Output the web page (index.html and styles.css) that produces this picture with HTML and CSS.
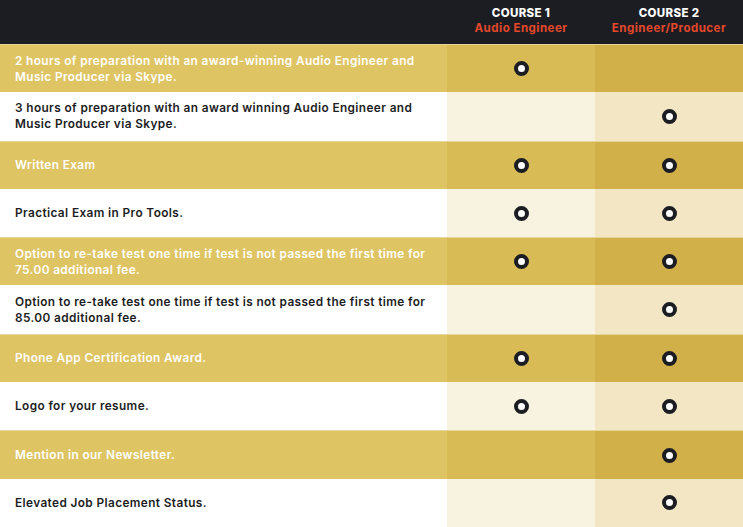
FILE: index.html
```html
<!DOCTYPE html>
<html>
<head>
<meta charset="utf-8">
<link rel="stylesheet" href="styles.css">
</head>
<body>
<div class="table">
  <div class="row head">
    <div class="label"></div>
    <div class="course"><span class="num">COURSE 1</span><span class="name">Audio Engineer</span></div>
    <div class="course"><span class="num">COURSE 2</span><span class="name">Engineer/Producer</span></div>
  </div>
  <div class="row gold">
    <div class="label"><span>2 hours of preparation with an award-winning Audio Engineer and Music Producer via Skype.</span></div>
    <div class="c1"><span class="dot"></span></div>
    <div class="c2"></div>
  </div>
  <div class="row light">
    <div class="label"><span>3 hours of preparation with an award winning Audio Engineer and Music Producer via Skype.</span></div>
    <div class="c1"></div>
    <div class="c2"><span class="dot"></span></div>
  </div>
  <div class="row gold">
    <div class="label"><span>Written Exam</span></div>
    <div class="c1"><span class="dot"></span></div>
    <div class="c2"><span class="dot"></span></div>
  </div>
  <div class="row light">
    <div class="label"><span>Practical Exam in Pro Tools.</span></div>
    <div class="c1"><span class="dot"></span></div>
    <div class="c2"><span class="dot"></span></div>
  </div>
  <div class="row gold">
    <div class="label"><span>Option to re-take test one time if test is not passed the first time for 75.00 additional fee.</span></div>
    <div class="c1"><span class="dot"></span></div>
    <div class="c2"><span class="dot"></span></div>
  </div>
  <div class="row light">
    <div class="label"><span>Option to re-take test one time if test is not passed the first time for 85.00 additional fee.</span></div>
    <div class="c1"></div>
    <div class="c2"><span class="dot"></span></div>
  </div>
  <div class="row gold">
    <div class="label"><span>Phone App Certification Award.</span></div>
    <div class="c1"><span class="dot"></span></div>
    <div class="c2"><span class="dot"></span></div>
  </div>
  <div class="row light">
    <div class="label"><span>Logo for your resume.</span></div>
    <div class="c1"><span class="dot"></span></div>
    <div class="c2"><span class="dot"></span></div>
  </div>
  <div class="row gold">
    <div class="label"><span>Mention in our Newsletter.</span></div>
    <div class="c1"></div>
    <div class="c2"><span class="dot"></span></div>
  </div>
  <div class="row light">
    <div class="label"><span>Elevated Job Placement Status.</span></div>
    <div class="c1"></div>
    <div class="c2"><span class="dot"></span></div>
  </div>
</div>
</body>
</html>
```
FILE: styles.css
```css
html, body {
  margin: 0;
  padding: 0;
  background: #ffffff;
  overflow: hidden;
}
body {
  font-family: Inter, "Open Sans", sans-serif;
}
.table {
  width: 743px;
}
.row {
  display: grid;
  grid-template-columns: 447px 148px 148px;
  height: 48.3px;
  box-sizing: border-box;
}
.row.head {
  height: 44px;
  background: #1c1d23;
}
.course {
  display: flex;
  flex-direction: column;
  align-items: center;
  justify-content: flex-start;
  padding-top: 6px;
  line-height: 15px;
}
.num {
  color: #ffffff;
  font-weight: 800;
  font-size: 11.5px;
  letter-spacing: 0.35px;
}
.name {
  color: #e4482a;
  font-weight: 700;
  font-size: 11.5px;
  letter-spacing: 0.5px;
}
.label {
  display: flex;
  align-items: center;
  padding: 0 15px;
  font-size: 11.8px;
  font-weight: 600;
  line-height: 16px;
  letter-spacing: 0.4px;
}
.label span {
  max-width: 420px;
}
.gold .label { background: #dec463; color: #ffffff; }
.gold .c1 { background: #d8bb55; }
.gold .c2 { background: #d1b04a; }
.light .label { background: #ffffff; color: #1c1d23; }
.light .c1 { background: #f8f2e0; }
.light .c2 { background: #f2e6c4; }
.row.gold { border-top: 1px solid #e6d69a; }
.c1, .c2 {
  display: flex;
  align-items: center;
  justify-content: center;
}
.dot {
  width: 7px;
  height: 7px;
  border: 4px solid #1c1d23;
  border-radius: 50%;
  background: #ffffff;
}
```
